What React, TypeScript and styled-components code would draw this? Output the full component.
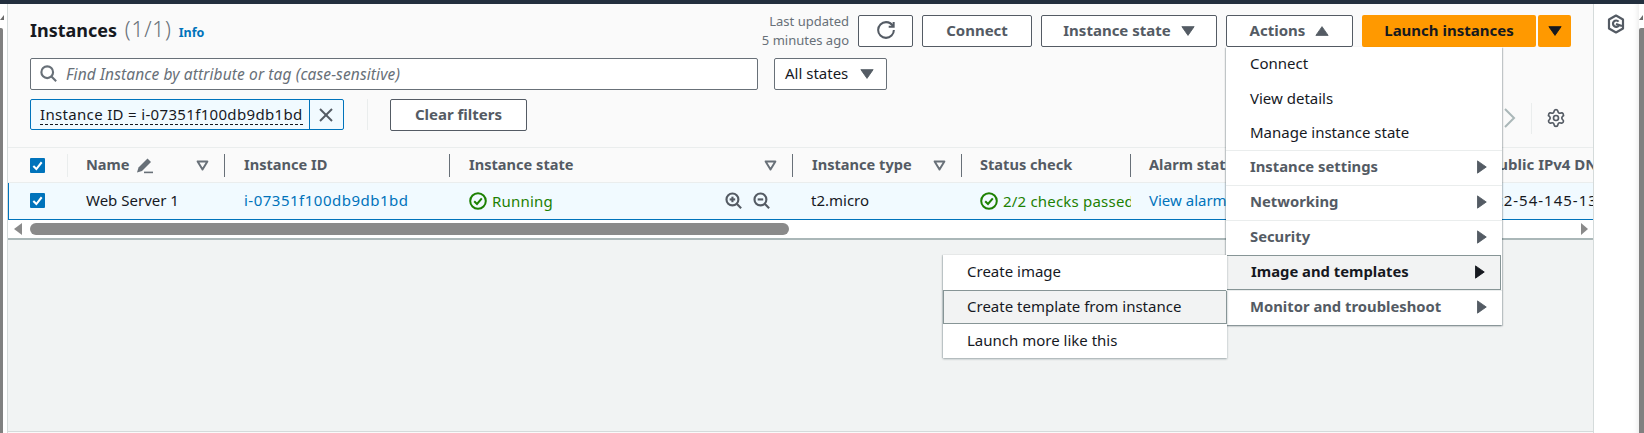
import styled, { createGlobalStyle } from "styled-components";
import { Settings } from "lucide-react";

const GlobalStyle = createGlobalStyle`
  html, body {
    margin: 0;
    width: 1644px;
    height: 433px;
    overflow: hidden;
    background: #fff;
    font-family: "Noto Sans", "Open Sans", Arial, sans-serif;
    font-size: 15px;
    color: #16191f;
  }
  * { box-sizing: border-box; }
`;

const Page = styled.div`
  display: flex;
  flex-direction: column;
  width: 1644px;
  height: 433px;
`;

const TopBar = styled.div`
  height: 4px;
  flex: none;
  background: #232f3e;
`;

const Body = styled.div`
  flex: 1;
  display: flex;
  min-height: 0;
`;

const LeftGutter = styled.div`
  width: 8px;
  flex: none;
  display: flex;
  flex-direction: column;
  background: #fff;
  border-right: 1px solid #d5dbdb;
  padding-top: 11px;
`;

const GutterArrow = styled.div`
  width: 0;
  height: 0;
  border-left: 4px solid transparent;
  border-right: 0 solid transparent;
  border-bottom: 5px solid #6b6b6b;
`;

const GutterThumb = styled.div`
  width: 3px;
  flex: 1;
  margin-top: 8px;
  background: #808080;
  border-radius: 0 2px 0 0;
`;

const Main = styled.div`
  width: 1585px;
  flex: none;
  display: flex;
  flex-direction: column;
  background: #fafafa;
  overflow: hidden;
`;

const Header = styled.div`
  display: flex;
  flex-direction: column;
  padding: 11px 0 17px 22px;
`;

const TitleRow = styled.div`
  display: flex;
  align-items: center;
  justify-content: space-between;
  height: 32px;
  padding-right: 22px;
`;

const TitleGroup = styled.div`
  display: flex;
  align-items: baseline;
  gap: 7px;
  padding-bottom: 3px;
`;

const Title = styled.h1`
  margin: 0;
  font-size: 18px;
  line-height: 24px;
  font-weight: 700;
  color: #16191f;

  & span {
    font-size: 21px;
    font-weight: 300;
    color: #687078;
    margin-left: 3px;
    letter-spacing: 0.8px;
  }
`;

const InfoLink = styled.a`
  font-size: 12.5px;
  font-weight: 700;
  color: #0073bb;
`;

const Actions = styled.div`
  display: flex;
  align-items: center;
  gap: 9px;
`;

const Updated = styled.div`
  font-size: 13px;
  line-height: 19px;
  text-align: right;
  color: #687078;
`;

const Button = styled.button<{ $width: number }>`
  display: inline-flex;
  align-items: center;
  justify-content: center;
  gap: 10px;
  width: ${({ $width }) => $width}px;
  height: 32px;
  padding: 0 0 2px;
  background: #fff;
  border: 1px solid #545b64;
  border-radius: 2px;
  color: #545b64;
  font-family: inherit;
  font-size: 15px;
  font-weight: 700;
`;

const PrimaryGroup = styled.div`
  display: flex;
  gap: 2px;
`;

const PrimaryButton = styled.button<{ $width: number }>`
  display: inline-flex;
  align-items: center;
  justify-content: center;
  width: ${({ $width }) => $width}px;
  height: 32px;
  padding: 0 0 2px;
  background: #ff9900;
  border: 0;
  border-radius: 2px;
  color: #16191f;
  font-family: inherit;
  font-size: 15px;
  font-weight: 700;
`;

const ActionsWrap = styled.div`
  position: relative;
  display: flex;
`;

const Menu = styled.div`
  position: absolute;
  z-index: 3;
  top: 100%;
  left: 0;
  width: 276px;
  background: #fff;
  box-shadow: 0 1px 2px rgba(0, 28, 36, 0.3), 1px 1px 1px rgba(0, 28, 36, 0.15),
    -1px 1px 1px rgba(0, 28, 36, 0.15);
`;

const MenuItem = styled.div<{ $hover?: boolean }>`
  display: flex;
  align-items: center;
  justify-content: space-between;
  height: 34.4px;
  padding: 0 16px 2px 24px;
  color: #16191f;
  background: ${({ $hover }) => ($hover ? "#f2f3f3" : "transparent")};
  box-shadow: ${({ $hover }) => ($hover ? "inset 0 0 0 1px #879596" : "none")};
`;

const MenuSection = styled.div<{ $active?: boolean }>`
  position: relative;
  display: flex;
  align-items: center;
  justify-content: space-between;
  height: 35px;
  padding: 0 14px 4px 24px;
  border-top: 1px solid ${({ $active }) => ($active ? "#879596" : "#eaeded")};
  border-bottom: ${({ $active }) => ($active ? "1px solid #879596" : "0")};
  border-left: ${({ $active }) => ($active ? "1px solid #879596" : "0")};
  border-right: ${({ $active }) => ($active ? "1px solid #879596" : "0")};
  margin-right: ${({ $active }) => ($active ? "1px" : "0")};
  background: ${({ $active }) => ($active ? "#f2f3f3" : "transparent")};
  color: ${({ $active }) => ($active ? "#16191f" : "#545b64")};
  font-size: 14.8px;
  font-weight: 700;
`;

const SubMenu = styled.div`
  position: absolute;
  top: -1px;
  right: 100%;
  width: 284px;
  background: #fff;
  color: #16191f;
  font-size: 15px;
  font-weight: 400;
  box-shadow: 0 1px 2px rgba(0, 28, 36, 0.35), -1px 0 1px rgba(0, 28, 36, 0.12);
`;

const SearchRow = styled.div`
  display: flex;
  gap: 16px;
  margin-top: 11px;
`;

const SearchBox = styled.div`
  display: flex;
  align-items: center;
  gap: 9px;
  width: 728px;
  height: 32px;
  padding: 0 0 1px 9px;
  background: #fff;
  border: 1px solid #687078;
  border-radius: 2px;
  color: #687078;
  font-size: 15.5px;
  font-style: italic;
  letter-spacing: 0.12px;
`;

const SelectBox = styled.div`
  display: flex;
  align-items: center;
  gap: 12px;
  width: 113px;
  height: 32px;
  padding: 0 0 2px 10px;
  background: #fff;
  border: 1px solid #687078;
  border-radius: 2px;
  color: #16191f;
`;

const FilterRow = styled.div`
  display: flex;
  align-items: center;
  height: 31px;
  margin-top: 9px;
  padding-right: 27px;
`;

const Chip = styled.div`
  display: flex;
  width: 314px;
  height: 31px;
  background: #f1faff;
  border: 1px solid #0073bb;
  border-radius: 2px;
`;

const ChipLabel = styled.div`
  flex: 1;
  padding-left: 9px;
  display: flex;
  align-items: center;
  color: #16191f;

  & span {
    border-bottom: 1px dashed #16191f;
    line-height: 20px;
    letter-spacing: 0.33px;
    white-space: nowrap;
  }
`;

const ChipClose = styled.div`
  width: 34px;
  flex: none;
  display: flex;
  align-items: center;
  justify-content: center;
  padding-right: 2px;
  border-left: 1px solid #0073bb;
  color: #545b64;
`;

const VLine = styled.div<{ $height: number; $left: number }>`
  width: 1px;
  height: ${({ $height }) => $height}px;
  margin-left: ${({ $left }) => $left}px;
  background: #eaeded;
`;

const ClearButton = styled(Button)`
  margin-left: 22px;
`;

const Pager = styled.div`
  margin-left: auto;
  margin-top: 7px;
  display: flex;
  align-items: center;
  color: #aab7b8;
`;

const GearWrap = styled.div`
  display: flex;
  margin-left: 14px;
  color: #545b64;
`;

const columns = "60px 157px 225px 343px 169px 169px 339px 1fr";

const TableHead = styled.div`
  display: grid;
  grid-template-columns: ${columns};
  align-items: center;
  height: 36px;
  border-top: 1px solid #eaeded;
  border-bottom: 1px solid #eaeded;
  background: #fafafa;
`;

const HeadCell = styled.div<{ $light?: boolean; $pad?: number }>`
  display: flex;
  align-items: center;
  height: 23px;
  padding-left: ${({ $pad }) => $pad ?? 19}px;
  padding-bottom: ${({ $light }) => ($light ? "0" : "3px")};
  border-right: 1px solid ${({ $light }) => ($light ? "#eaeded" : "#687078")};
  color: #545b64;
  font-size: 14.6px;
  font-weight: 700;
  white-space: nowrap;
  overflow: hidden;
`;

const LastHead = styled(HeadCell)`
  border-right: 0;
  font-size: 15px;
`;

const SortMark = styled.span`
  display: flex;
  margin-left: auto;
  margin-right: 15px;
  padding-top: 3px;
`;

const Row = styled.div`
  display: grid;
  grid-template-columns: ${columns};
  align-items: center;
  height: 37px;
  background: #f1faff;
  border-bottom: 1px solid #0073bb;
  box-shadow: inset 1px 0 0 #0073bb;
`;

const Cell = styled.div<{ $pad?: number; $spaced?: boolean }>`
  display: flex;
  align-items: center;
  height: 100%;
  min-width: 0;
  padding-left: ${({ $pad }) => $pad ?? 19}px;
  padding-bottom: 2px;
  letter-spacing: ${({ $spaced }) => ($spaced ? "1px" : "0")};
  white-space: nowrap;
  overflow: hidden;
`;

const Link = styled.a<{ $spaced?: boolean }>`
  color: #0073bb;
  letter-spacing: ${({ $spaced }) => ($spaced ? "0.5px" : "0")};
`;

const Status = styled.span<{ $spacing?: number }>`
  display: inline-flex;
  align-items: center;
  gap: 5px;
  margin-top: 2px;
  color: #1d8102;
  letter-spacing: ${({ $spacing }) => $spacing ?? 0}px;
`;

const ZoomIcons = styled.span`
  display: flex;
  gap: 11px;
  margin-left: auto;
  margin-right: 23px;
  color: #545b64;
`;

const CheckBox = styled.span`
  display: flex;
  align-items: center;
  justify-content: center;
  width: 15px;
  height: 15px;
  background: #0073bb;
  border-radius: 1px;
`;

const ScrollTrack = styled.div`
  display: flex;
  align-items: center;
  height: 20px;
  padding: 0 5px 0 6px;
  background: #fff;
  border-bottom: 2px solid #aab7b8;
`;

const ScrollThumb = styled.div`
  width: 759px;
  height: 12px;
  margin-left: 8px;
  background: #8a8a8a;
  border-radius: 6px;
`;

const ScrollArrow = styled.div<{ $right?: boolean }>`
  width: 0;
  height: 0;
  border-top: 6px solid transparent;
  border-bottom: 6px solid transparent;
  border-right: ${({ $right }) => ($right ? "0" : "8px solid #8a8a8a")};
  border-left: ${({ $right }) => ($right ? "7px solid #8a8a8a" : "0")};
  margin-left: ${({ $right }) => ($right ? "auto" : "0")};
`;

const Empty = styled.div`
  flex: 1;
  background: #f1f3f3;
  border-bottom: 1px solid #d5dbdb;
  margin-bottom: 1px;
`;

const Rail = styled.div`
  flex: 1;
  display: flex;
  background: #fff;
  border-left: 1px solid #d5dbdb;
`;

const RailContent = styled.div`
  flex: 1;
  display: flex;
  justify-content: center;
  padding-top: 10px;
  padding-right: 2px;
  color: #545b64;
  box-shadow: inset -6px 0 6px -6px rgba(0, 0, 0, 0.12);
`;

const RailScroll = styled.div`
  width: 5px;
  flex: none;
  display: flex;
  flex-direction: column;
  padding-top: 11px;
`;

const RailThumb = styled.div`
  flex: 1;
  margin-top: 8px;
  background: #808080;
  border-radius: 2px 0 0 0;
`;

const Triangle = ({ dir, color = "#545b64", size = 14 }: { dir: "up" | "down" | "right"; color?: string; size?: number }) => {
  const points = dir === "down" ? "1,3 15,3 8,13" : dir === "up" ? "1,13 15,13 8,3" : "4,1 14,8 4,15";
  return (
    <svg width={size} height={size} viewBox="0 0 16 16" style={{ flex: "none", marginTop: 2 }}>
      <polygon points={points} fill={color} stroke={color} strokeWidth="1" strokeLinejoin="round" />
    </svg>
  );
};

const SortIcon = () => (
  <svg width="13" height="13" viewBox="0 0 16 16">
    <polygon points="2,3 14,3 8,13" fill="none" stroke="#687078" strokeWidth="2.4" strokeLinejoin="round" />
  </svg>
);

const PencilIcon = () => (
  <svg width="18" height="18" viewBox="0 0 18 18" fill="#687078" style={{ marginLeft: 6, marginTop: 3 }}>
    <path d="M1 16.5 L2.5 11.5 L11.5 2.5 L15 6 L6 15 Z" />
    <rect x="8" y="15.6" width="9" height="1.6" />
  </svg>
);

const Tick = () => (
  <svg width="13" height="13" viewBox="0 0 14 14">
    <polyline points="2.5,7.5 5.8,10.8 11.5,3.5" fill="none" stroke="#fff" strokeWidth="2.2" />
  </svg>
);

const StatusIcon = () => (
  <svg width="18" height="18" viewBox="0 0 18 18" fill="none" stroke="#1d8102" strokeWidth="2" style={{ flex: "none" }}>
    <circle cx="9" cy="9" r="7.8" />
    <polyline points="5.2,9.2 8,12 12.8,6.4" />
  </svg>
);

const MagnifyIcon = ({ kind }: { kind: "plus" | "minus" }) => (
  <svg width="17" height="17" viewBox="0 0 16 16" fill="none" stroke="currentColor" strokeWidth="2">
    <circle cx="7" cy="7" r="5.6" />
    <line x1="11" y1="11" x2="15.2" y2="15.2" />
    <line x1="4.4" y1="7" x2="9.6" y2="7" />
    {kind === "plus" && <line x1="7" y1="4.4" x2="7" y2="9.6" />}
  </svg>
);

const SearchIcon = () => (
  <svg width="17" height="17" viewBox="0 0 16 16" fill="none" stroke="#687078" strokeWidth="2" style={{ flex: "none" }}>
    <circle cx="6.8" cy="6.8" r="5.5" />
    <line x1="10.8" y1="10.8" x2="15.2" y2="15.2" />
  </svg>
);

const RefreshIcon = () => (
  <svg width="18" height="18" viewBox="0 0 16 16" fill="none" stroke="#545b64" strokeWidth="1.8">
    <path d="M15 8c0 3.87-3.13 7-7 7s-7-3.13-7-7 3.13-7 7-7c2.79 0 5.2 1.63 6.33 4" />
    <path d="M14.8 0.8v4.4h-4.4" />
  </svg>
);

const HexIcon = () => (
  <svg width="18" height="20" viewBox="0 0 18 20" fill="none" stroke="currentColor" strokeWidth="2.2">
    <polygon points="9,1.5 16,5.5 16,14.5 9,18.5 2,14.5 2,5.5" strokeLinejoin="round" />
    <path d="M11.6 7.6 A3.2 3.2 0 1 0 11.9 11.4" />
    <line x1="9" y1="10" x2="15" y2="12" />
  </svg>
);

export default function App() {
  return (
    <Page>
      <GlobalStyle />
      <TopBar />
      <Body>
        <LeftGutter>
          <GutterArrow />
          <GutterThumb />
        </LeftGutter>
        <Main>
          <Header>
            <TitleRow>
              <TitleGroup>
                <Title>
                  Instances <span>(1/1)</span>
                </Title>
                <InfoLink>Info</InfoLink>
              </TitleGroup>
              <Actions>
                <Updated>
                  Last updated
                  <br />5 minutes ago
                </Updated>
                <Button $width={55}>
                  <RefreshIcon />
                </Button>
                <Button $width={110}>Connect</Button>
                <Button $width={176}>
                  Instance state <Triangle dir="down" />
                </Button>
                <ActionsWrap>
                  <Button $width={127}>
                    Actions <Triangle dir="up" />
                  </Button>
                  <Menu>
                    <MenuItem>Connect</MenuItem>
                    <MenuItem>View details</MenuItem>
                    <MenuItem>Manage instance state</MenuItem>
                    <MenuSection>
                      Instance settings <Triangle dir="right" />
                    </MenuSection>
                    <MenuSection>
                      Networking <Triangle dir="right" />
                    </MenuSection>
                    <MenuSection>
                      Security <Triangle dir="right" />
                    </MenuSection>
                    <MenuSection $active>
                      Image and templates <Triangle dir="right" color="#16191f" />
                      <SubMenu>
                        <MenuItem>Create image</MenuItem>
                        <MenuItem $hover>Create template from instance</MenuItem>
                        <MenuItem>Launch more like this</MenuItem>
                      </SubMenu>
                    </MenuSection>
                    <MenuSection>
                      Monitor and troubleshoot <Triangle dir="right" />
                    </MenuSection>
                  </Menu>
                </ActionsWrap>
                <PrimaryGroup>
                  <PrimaryButton $width={174}>Launch instances</PrimaryButton>
                  <PrimaryButton $width={33}>
                    <Triangle dir="down" color="#16191f" />
                  </PrimaryButton>
                </PrimaryGroup>
              </Actions>
            </TitleRow>
            <SearchRow>
              <SearchBox>
                <SearchIcon />
                Find Instance by attribute or tag (case-sensitive)
              </SearchBox>
              <SelectBox>
                All states <Triangle dir="down" />
              </SelectBox>
            </SearchRow>
            <FilterRow>
              <Chip>
                <ChipLabel>
                  <span>Instance ID = i-07351f100db9db1bd</span>
                </ChipLabel>
                <ChipClose>
                  <svg width="16" height="16" viewBox="0 0 16 16" stroke="currentColor" strokeWidth="2">
                    <line x1="2" y1="2" x2="14" y2="14" />
                    <line x1="14" y1="2" x2="2" y2="14" />
                  </svg>
                </ChipClose>
              </Chip>
              <VLine $height={31} $left={23} />
              <ClearButton $width={137}>Clear filters</ClearButton>
              <Pager>
                <svg width="14" height="22" viewBox="0 0 14 22" fill="none" stroke="currentColor" strokeWidth="2">
                  <polyline points="3,2 12,11 3,20" />
                </svg>
                <VLine $height={31} $left={15} />
                <GearWrap>
                  <Settings size={20} strokeWidth={2} />
                </GearWrap>
              </Pager>
            </FilterRow>
          </Header>
          <TableHead>
            <HeadCell $light $pad={22}>
              <CheckBox>
                <Tick />
              </CheckBox>
            </HeadCell>
            <HeadCell $pad={18}>
              Name <PencilIcon />
              <SortMark>
                <SortIcon />
              </SortMark>
            </HeadCell>
            <HeadCell>Instance ID</HeadCell>
            <HeadCell>
              Instance state
              <SortMark>
                <SortIcon />
              </SortMark>
            </HeadCell>
            <HeadCell>
              Instance type
              <SortMark>
                <SortIcon />
              </SortMark>
            </HeadCell>
            <HeadCell $pad={18}>Status check</HeadCell>
            <HeadCell $pad={18}>Alarm status</HeadCell>
            <LastHead>Public IPv4 DNS</LastHead>
          </TableHead>
          <Row>
            <Cell $pad={22}>
              <CheckBox>
                <Tick />
              </CheckBox>
            </Cell>
            <Cell $pad={18}>Web Server 1</Cell>
            <Cell>
              <Link $spaced>i-07351f100db9db1bd</Link>
            </Cell>
            <Cell>
              <Status $spacing={0.2}>
                <StatusIcon /> Running
              </Status>
              <ZoomIcons>
                <MagnifyIcon kind="plus" />
                <MagnifyIcon kind="minus" />
              </ZoomIcons>
            </Cell>
            <Cell $pad={18}>t2.micro</Cell>
            <Cell $pad={18}>
              <Status $spacing={0.2}>
                <StatusIcon /> 2/2 checks passed
              </Status>
            </Cell>
            <Cell $pad={18}>
              <Link>View alarms</Link>
            </Cell>
            <Cell $pad={16} $spaced>
              ec2-54-145-13-200.compute-1.amazonaws.com
            </Cell>
          </Row>
          <ScrollTrack>
            <ScrollArrow />
            <ScrollThumb />
            <ScrollArrow $right />
          </ScrollTrack>
          <Empty />
        </Main>
        <Rail>
          <RailContent>
            <HexIcon />
          </RailContent>
          <RailScroll>
            <GutterArrow />
            <RailThumb />
          </RailScroll>
        </Rail>
      </Body>
    </Page>
  );
}
